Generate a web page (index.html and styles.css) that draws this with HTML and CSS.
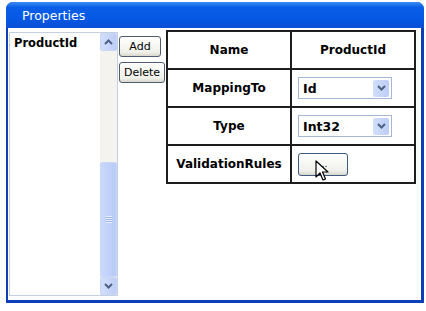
FILE: index.html
```html
<!DOCTYPE html>
<html lang="en">
<head>
    <meta charset="UTF-8">
    <title>Properties</title>
    <link rel="stylesheet" href="styles.css">
</head>
<body>
    <div class="window">
        <div class="titlebar">Properties</div>
        <div class="client">
            <div class="listbox">
                <div class="list-items">
                    <div class="list-item">ProductId</div>
                </div>
                <div class="scrollbar">
                    <div class="sb-btn">
                        <svg width="9" height="6" viewBox="0 0 9 6"><path d="M1 5 L4.5 1.5 L8 5" fill="none" stroke="#4d6185" stroke-width="2"/></svg>
                    </div>
                    <div class="sb-track">
                        <div class="sb-thumb">
                            <span class="grip"></span>
                        </div>
                    </div>
                    <div class="sb-btn">
                        <svg width="9" height="6" viewBox="0 0 9 6"><path d="M1 1 L4.5 4.5 L8 1" fill="none" stroke="#4d6185" stroke-width="2"/></svg>
                    </div>
                </div>
            </div>
            <div class="actions">
                <button class="btn add">Add</button>
                <button class="btn">Delete</button>
            </div>
            <table class="props">
                <tr>
                    <td class="label">Name</td>
                    <td class="value center">ProductId</td>
                </tr>
                <tr>
                    <td class="label">MappingTo</td>
                    <td class="value">
                        <div class="combo"><span>Id</span><span class="combo-btn"><svg width="9" height="6" viewBox="0 0 9 6"><path d="M1 1 L4.5 4.5 L8 1" fill="none" stroke="#4d6185" stroke-width="2"/></svg></span></div>
                    </td>
                </tr>
                <tr>
                    <td class="label">Type</td>
                    <td class="value">
                        <div class="combo"><span>Int32</span><span class="combo-btn"><svg width="9" height="6" viewBox="0 0 9 6"><path d="M1 1 L4.5 4.5 L8 1" fill="none" stroke="#4d6185" stroke-width="2"/></svg></span></div>
                    </td>
                </tr>
                <tr>
                    <td class="label">ValidationRules</td>
                    <td class="value">
                        <div class="ellipsis-wrap">
                            <button class="btn ellipsis">...</button>
                            <svg class="cursor" width="14" height="22" viewBox="0 0 14 22"><path d="M1 1 L1 17 L5 13 L8 20 L10.5 19 L7.5 12 L13 12 Z" fill="#fff" stroke="#000" stroke-width="1.2" stroke-linejoin="round"/></svg>
                        </div>
                    </td>
                </tr>
            </table>
        </div>
    </div>
</body>
</html>
```

FILE: styles.css
```css
body {
    margin: 0;
    background: #fff;
    font-family: "DejaVu Sans", Verdana, sans-serif;
}
.window {
    margin: 2px 2px 0 6px;
    width: 418px;
    height: 301px;
    display: flex;
    flex-direction: column;
    background: #0d3fb8;
    border-radius: 7px 7px 0 0;
}
.titlebar {
    height: 26px;
    line-height: 27px;
    padding-left: 16px;
    color: #fff;
    font-family: "DejaVu Sans", Tahoma, sans-serif;
    font-size: 12.5px;
    border-radius: 7px 7px 0 0;
    background: linear-gradient(#3f8cf3 0%, #0a5fe8 20%, #0559e5 60%, #0a4fd6 100%);
}
.client {
    flex: 1;
    margin: 0 3px 3px 2px;
    background: #fff;
    display: flex;
    align-items: flex-start;
    padding: 4px 0 0 1px;
}
.listbox {
    width: 107px;
    height: 262px;
    border: 1px solid #c3cfe2;
    display: flex;
}
.list-items {
    flex: 1;
    padding: 3px 4px;
}
.list-item {
    font-weight: bold;
    font-size: 11.5px;
}
.scrollbar {
    width: 17px;
    display: flex;
    flex-direction: column;
    background: #f4f3ee;
}
.sb-btn {
    height: 16px;
    border: 1px solid #c9d6f5;
    border-radius: 2px;
    background: linear-gradient(90deg, #d2defb, #bdcdf6);
    display: flex;
    align-items: center;
    justify-content: center;
}
.sb-track {
    flex: 1;
    display: flex;
    flex-direction: column;
    justify-content: flex-end;
}
.sb-thumb {
    height: 113px;
    border: 1px solid #c9d6f5;
    border-radius: 2px;
    background: linear-gradient(90deg, #cad8fc, #b8cbf7);
    display: flex;
    align-items: center;
    justify-content: center;
}
.grip {
    width: 6px;
    height: 7px;
    background: repeating-linear-gradient(#e8eefc 0 1px, #9fb4e6 1px 2px);
}
.actions {
    display: flex;
    flex-direction: column;
    align-items: flex-start;
    gap: 5px;
    margin: 4px 0 0 1px;
    width: 47px;
}
.btn {
    font-family: "DejaVu Sans", Tahoma, sans-serif;
    font-size: 11px;
    color: #000;
    height: 21px;
    padding: 0 4px;
    border: 1px solid #4e5c6e;
    border-radius: 3px;
    background: linear-gradient(#ffffff, #f0f0ea 80%, #d8d6cc);
}
.btn.add {
    width: 42px;
}
.props {
    border-collapse: collapse;
    margin-top: -2px;
}
.props td {
    border: 2px solid #1d1d1d;
    height: 36px;
    padding: 0;
    font-weight: bold;
    font-size: 12px;
}
.label {
    width: 122px;
    text-align: center;
}
.value {
    width: 116px;
    padding-left: 6px !important;
}
.value.center {
    text-align: center;
    padding-left: 0 !important;
    width: 122px;
}
.combo {
    width: 94px;
    height: 22px;
    border: 1px solid #a5b7d6;
    display: flex;
    align-items: center;
    justify-content: space-between;
    font-size: 12.5px;
    padding-left: 4px;
    box-sizing: border-box;
}
.combo-btn {
    width: 16px;
    height: 17px;
    margin-right: 2px;
    background: linear-gradient(90deg, #d2defb, #bdcdf6);
    border-radius: 2px;
    display: flex;
    align-items: center;
    justify-content: center;
}
.ellipsis-wrap {
    position: relative;
    width: 50px;
}
.ellipsis {
    width: 50px;
    height: 23px;
    font-size: 9px;
    line-height: 10px;
    border-color: #3d5a7f;
}
.cursor {
    position: absolute;
    left: 17px;
    top: 7px;
}
```
